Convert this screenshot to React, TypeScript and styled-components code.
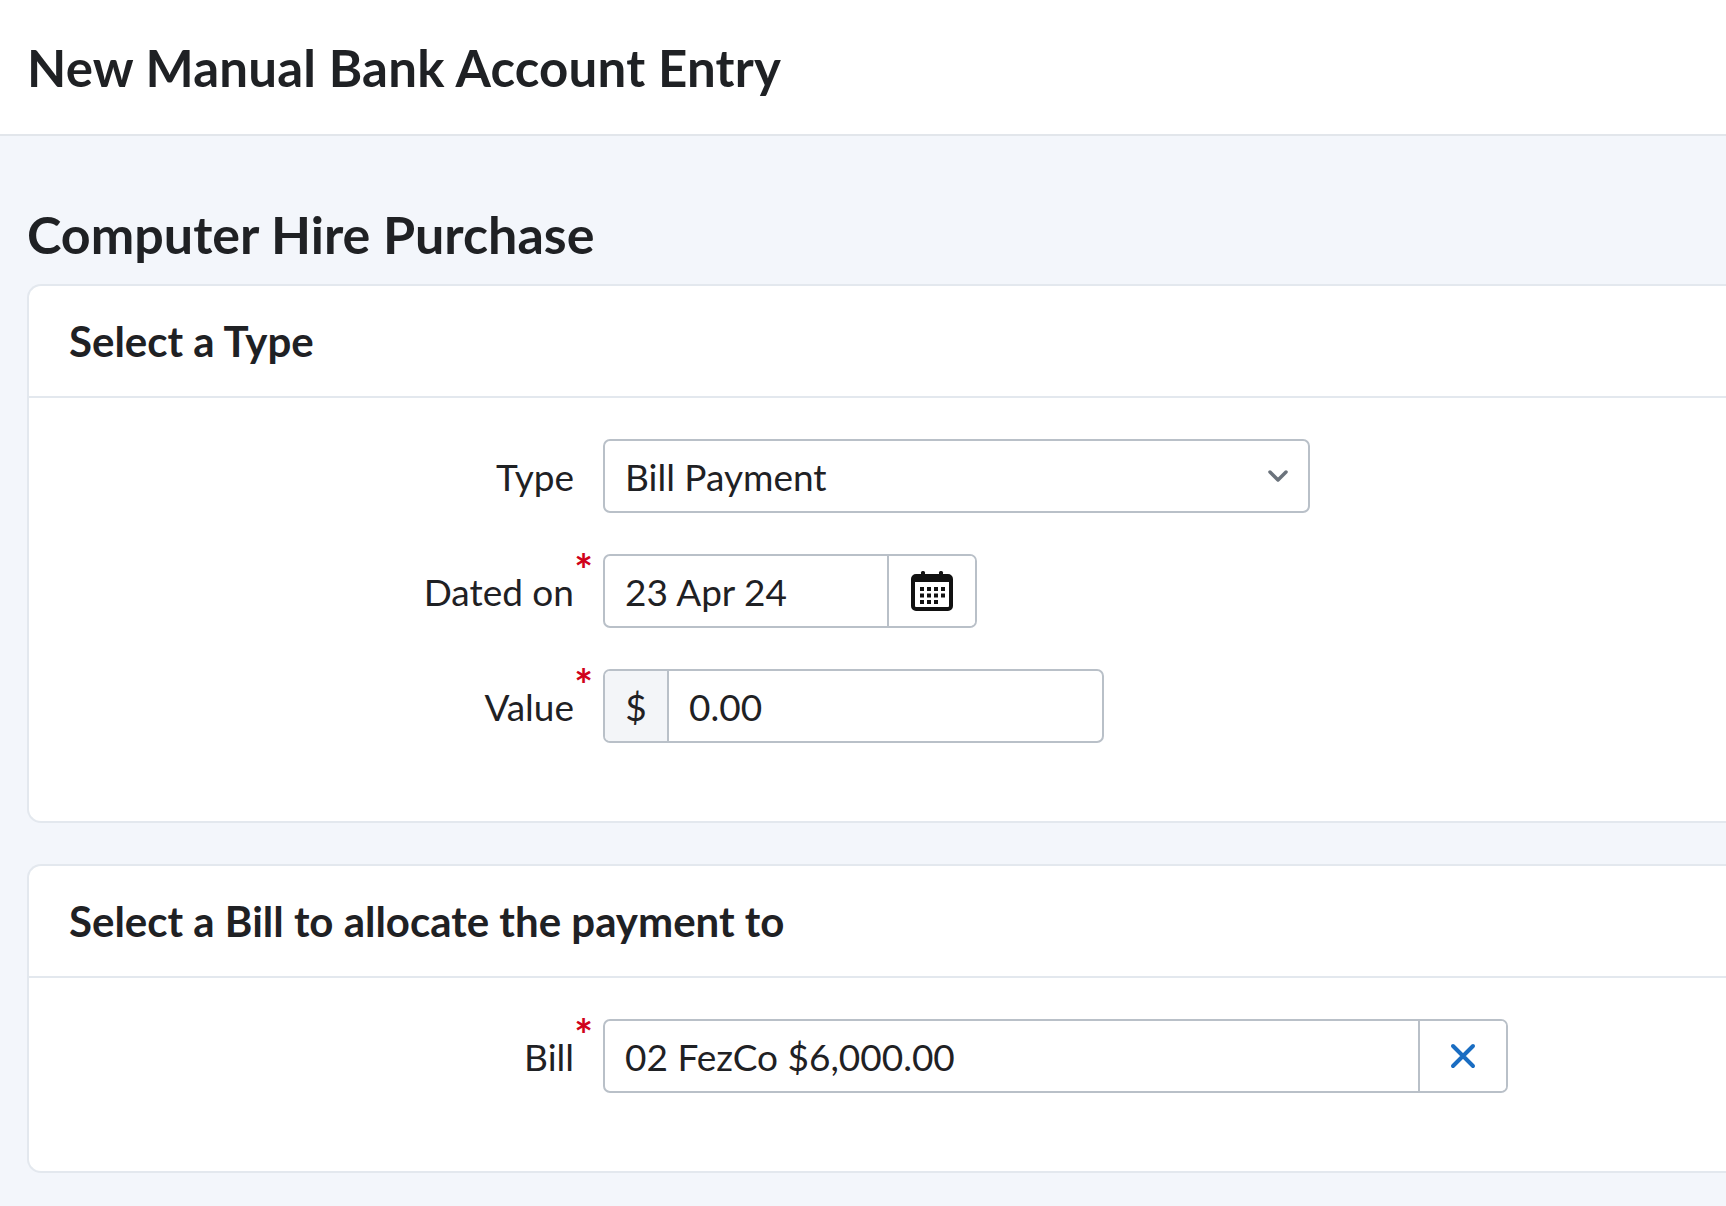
import React from 'react';
import styled, { createGlobalStyle } from 'styled-components';

const GlobalStyle = createGlobalStyle`
  html, body {
    margin: 0;
    padding: 0;
    background: #f3f6fb;
    font-family: Lato, "Open Sans", sans-serif;
    color: #1f2124;
    overflow: hidden;
  }
`;

const PageHeader = styled.header`
  height: 136px;
  box-sizing: border-box;
  background: #ffffff;
  border-bottom: 2px solid #e2e6eb;
  display: flex;
  align-items: center;
  padding-left: 27px;
`;

const PageTitle = styled.h1`
  margin: 0;
  font-size: 51px;
  font-weight: 700;
  letter-spacing: 0.2px;
`;

const Content = styled.main`
  padding: 68px 0 0 27px;
  display: flex;
  flex-direction: column;
`;

const SubTitle = styled.h2`
  margin: 0 0 20px;
  font-size: 52px;
  font-weight: 700;
  line-height: 60px;
`;

const Card = styled.section`
  background: #ffffff;
  border: 2px solid #e3e8ee;
  border-right: none;
  border-radius: 14px 0 0 14px;
  margin-bottom: 41px;
`;

const CardHeader = styled.div`
  height: 110px;
  display: flex;
  align-items: center;
  padding-left: 40px;
  border-bottom: 2px solid #e3e8ee;
  font-size: 42px;
  font-weight: 700;
`;

const CardBody = styled.div<{ $bottom: number }>`
  padding: 41px 0 ${(p) => p.$bottom}px;
  display: flex;
  flex-direction: column;
  gap: 41px;
`;

const Row = styled.div`
  display: flex;
  align-items: center;
`;

const Label = styled.label<{ $required?: boolean }>`
  width: 574px;
  box-sizing: border-box;
  padding-right: 29px;
  text-align: right;
  font-size: 37px;
  position: relative;
  &::after {
    content: ${(p) => (p.$required ? "'*'" : "''")};
    position: absolute;
    right: 10px;
    top: -26px;
    color: #d0021b;
    font-size: 44px;
    font-weight: 700;
  }
`;

const Field = styled.div<{ $width: number }>`
  width: ${(p) => p.$width}px;
  height: 74px;
  box-sizing: border-box;
  border: 2px solid #b9c0c8;
  border-radius: 7px;
  display: flex;
  align-items: stretch;
  overflow: hidden;
  background: #fff;
`;

const FieldText = styled.div`
  flex: 1;
  display: flex;
  align-items: center;
  padding-left: 20px;
  font-size: 37px;
`;

const Addon = styled.div<{ $width: number; $shade?: boolean; $side: 'left' | 'right' }>`
  width: ${(p) => p.$width}px;
  display: flex;
  align-items: center;
  justify-content: center;
  font-size: 37px;
  background: ${(p) => (p.$shade ? '#f3f5f8' : '#fff')};
  ${(p) => (p.$side === 'left' ? 'border-right' : 'border-left')}: 2px solid #b9c0c8;
`;

const Chevron = styled.div`
  width: 60px;
  display: flex;
  align-items: center;
  justify-content: center;
`;

function CalendarIcon() {
  return (
    <svg width="44" height="44" viewBox="0 0 44 44">
      <rect x="3" y="7" width="38" height="33" rx="3" fill="none" stroke="#111" strokeWidth="4" />
      <rect x="3" y="7" width="38" height="6" fill="#111" />
      <rect x="11" y="2" width="4" height="9" rx="1.5" fill="#111" />
      <rect x="29" y="2" width="4" height="9" rx="1.5" fill="#111" />
      {[0, 1, 2, 3].map((c) =>
        [0, 1, 2].map((r) =>
          r === 2 && c === 3 ? null : (
            <rect key={`${c}-${r}`} x={10 + c * 7} y={18 + r * 6.5} width="4" height="4" fill="#111" />
          ),
        ),
      )}
    </svg>
  );
}

export default function App() {
  return (
    <>
      <GlobalStyle />
      <PageHeader>
        <PageTitle>New Manual Bank Account Entry</PageTitle>
      </PageHeader>
      <Content>
        <SubTitle>Computer Hire Purchase</SubTitle>
        <Card>
          <CardHeader>Select a Type</CardHeader>
          <CardBody $bottom={78}>
            <Row>
              <Label>Type</Label>
              <Field $width={707}>
                <FieldText>Bill Payment</FieldText>
                <Chevron>
                  <svg width="22" height="14" viewBox="0 0 22 14">
                    <path d="M3 3l8 8 8-8" fill="none" stroke="#6b737c" strokeWidth="3.5" strokeLinecap="round" strokeLinejoin="round" />
                  </svg>
                </Chevron>
              </Field>
            </Row>
            <Row>
              <Label $required>Dated on</Label>
              <Field $width={374}>
                <FieldText>23 Apr 24</FieldText>
                <Addon $width={86} $side="right">
                  <CalendarIcon />
                </Addon>
              </Field>
            </Row>
            <Row>
              <Label $required>Value</Label>
              <Field $width={501}>
                <Addon $width={62} $shade $side="left">$</Addon>
                <FieldText>0.00</FieldText>
              </Field>
            </Row>
          </CardBody>
        </Card>
        <Card>
          <CardHeader>Select a Bill to allocate the payment to</CardHeader>
          <CardBody $bottom={78}>
            <Row>
              <Label $required>Bill</Label>
              <Field $width={905}>
                <FieldText>02 FezCo $6,000.00</FieldText>
                <Addon $width={86} $side="right">
                  <svg width="28" height="28" viewBox="0 0 28 28">
                    <path d="M4 4l20 20M24 4L4 24" stroke="#1a6dc2" strokeWidth="4" strokeLinecap="round" />
                  </svg>
                </Addon>
              </Field>
            </Row>
          </CardBody>
        </Card>
      </Content>
    </>
  );
}
